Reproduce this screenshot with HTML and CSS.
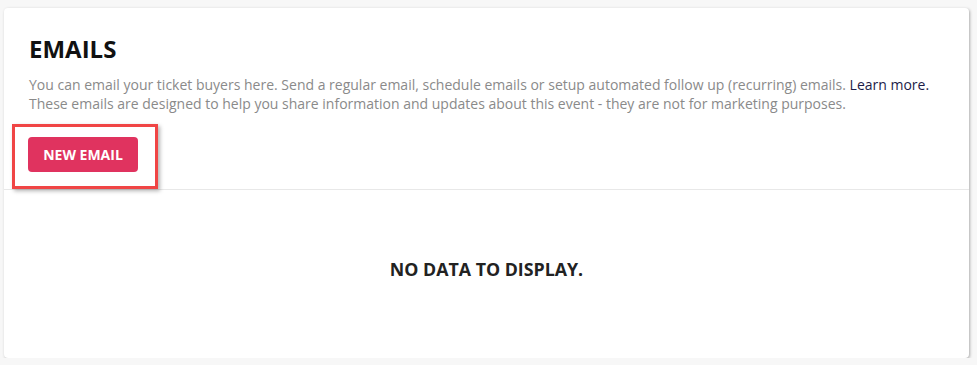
FILE: index.html
```html
<!DOCTYPE html>
<html lang="en">
  <head>
    <meta charset="UTF-8" />
    <title>Emails</title>
    <link rel="stylesheet" href="styles.css">
  </head>
  <body>
    <section class="card">
      <header class="card-head">
        <h1>EMAILS</h1>
        <p class="intro">
          You can email your ticket buyers here. Send a regular email, schedule emails or setup automated follow up (recurring) emails. <a href="#" class="learn">Learn more.</a><br>
          These emails are designed to help you share information and updates about this event - they are not for marketing purposes.
        </p>
        <div class="actions">
          <button class="btn-new">NEW EMAIL</button>
          <span class="highlight"></span>
        </div>
      </header>
      <div class="empty">NO DATA TO DISPLAY.</div>
    </section>
  </body>
</html>
```

FILE: styles.css
```css
html {
  font-family: "Open Sans", "Liberation Sans", sans-serif;
}
body {
  margin: 0;
  background-color: #f7f7f7;
}
.card {
  margin: 8px 0 0 4px;
  width: 965px;
  height: 350px;
  background-color: #fff;
  border-radius: 4px;
  box-shadow: 1px 1px 3px rgba(0, 0, 0, 0.3);
  display: flex;
  flex-direction: column;
}
.card-head {
  padding: 24px 25px 17px;
  border-bottom: 1px solid #e8e8e8;
}
.card-head h1 {
  font-size: 24px;
  font-weight: 700;
  color: #111;
  margin: 0;
  line-height: 33px;
}
.intro {
  font-size: 14px;
  line-height: 19px;
  color: #8a8a8a;
  margin: 10px 0 0;
}
.learn {
  color: #1c1c48;
  text-decoration: none;
}
.actions {
  position: relative;
  margin-top: 24px;
  height: 35px;
}
.btn-new {
  width: 110px;
  height: 35px;
  margin-left: -1px;
  border: none;
  border-radius: 4px;
  background-color: #e0335f;
  color: #fff;
  font-family: inherit;
  font-size: 14px;
  font-weight: 700;
  cursor: pointer;
}
/* annotation box round the button */
.highlight {
  position: absolute;
  left: -17px;
  top: -13px;
  width: 140px;
  height: 59px;
  border: 3px solid #f04545;
  box-shadow: 2px 2px 4px rgba(0, 0, 0, 0.3);
}
.empty {
  flex: 1;
  display: flex;
  align-items: center;
  justify-content: center;
  padding-bottom: 11px;
  font-size: 17.8px;
  font-weight: 700;
  color: #222;
}
```
